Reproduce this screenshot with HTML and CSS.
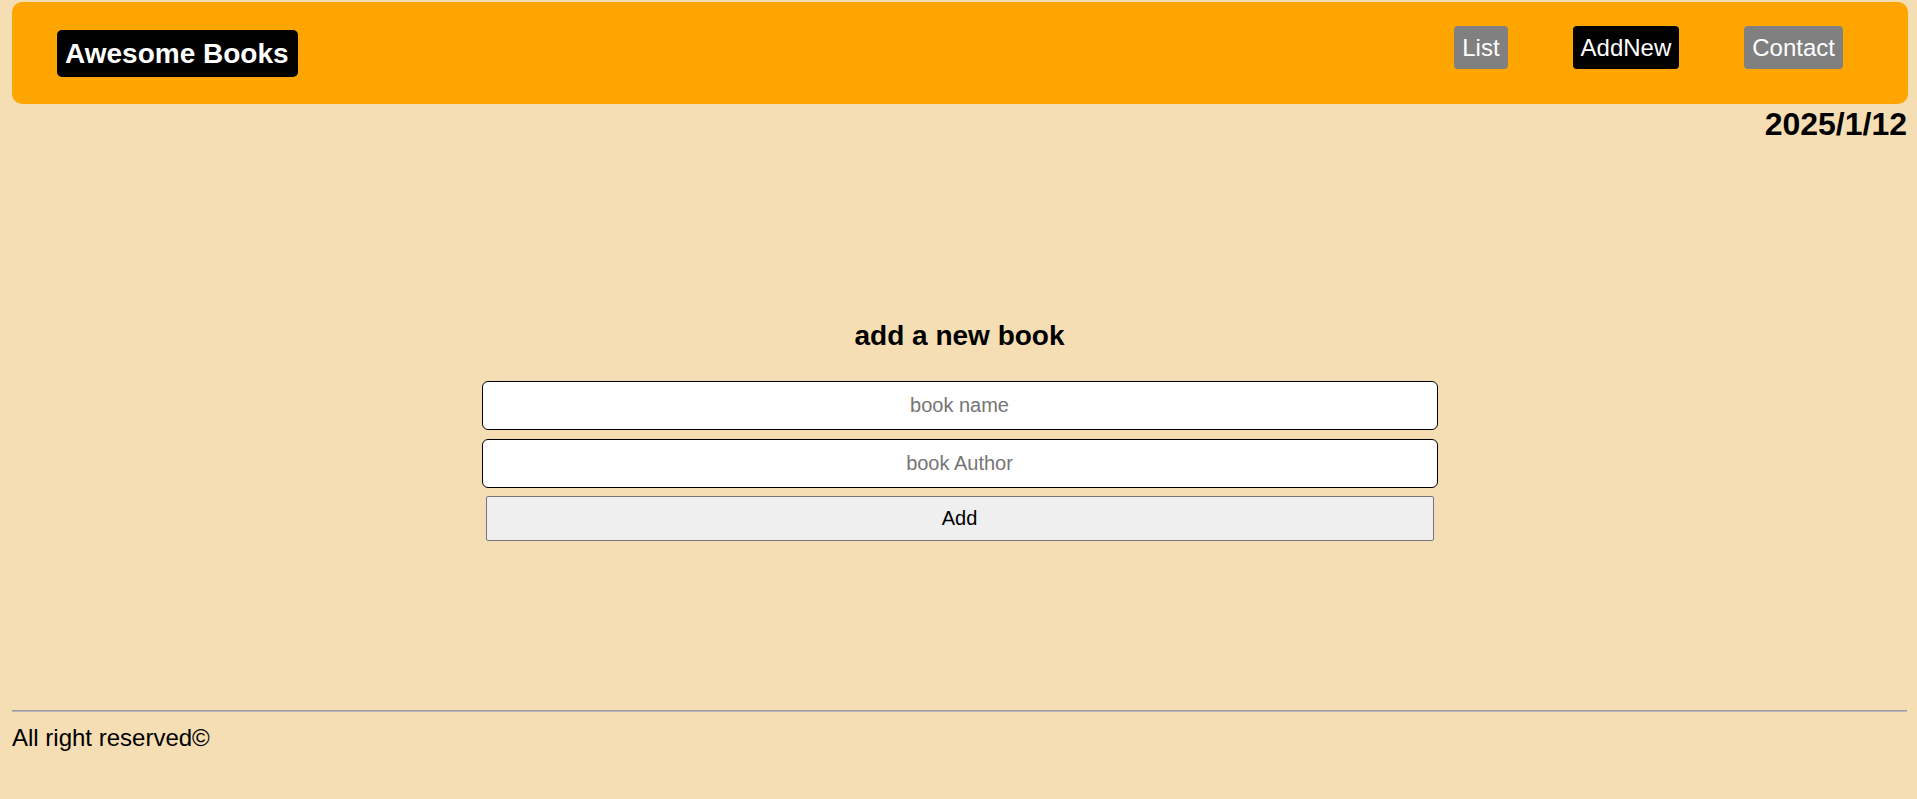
FILE: index.html
```html
<!DOCTYPE html>
<html lang="en">
<head>
<meta charset="utf-8">
<title>Awesome Books</title>
<link rel="stylesheet" href="styles.css">
</head>
<body>
  <header class="topbar">
    <h1 class="logo">Awesome Books</h1>
    <nav class="nav">
      <a class="nav-item" href="#">List</a>
      <a class="nav-item active" href="#">AddNew</a>
      <a class="nav-item" href="#">Contact</a>
    </nav>
  </header>
  <div class="date">2025/1/12</div>
  <main class="main">
    <h2 class="title">add a new book</h2>
    <form class="form">
      <input class="field field-first" type="text" placeholder="book name">
      <input class="field" type="text" placeholder="book Author">
      <button class="add-btn" type="button">Add</button>
    </form>
  </main>
  <footer class="footer">
    <hr class="rule">
    <p class="copy">All right reserved©</p>
  </footer>
</body>
</html>
```
FILE: styles.css
```css
html, body {
  margin: 0;
  padding: 0;
}
body {
  background: #f5deb3;
  font-family: "Liberation Sans", Arial, sans-serif;
  color: #000;
  padding: 2px 10px 0 12px;
}
.topbar {
  display: flex;
  align-items: flex-start;
  justify-content: space-between;
  height: 102px;
  box-sizing: border-box;
  background: #ffa500;
  border-radius: 10px;
  padding: 24px 0 0 45px;
  margin-right: -1px;
}
.logo {
  margin: 4px 0 0 0;
  background: #000;
  color: #fff;
  font-size: 28px;
  font-weight: bold;
  line-height: 33px;
  padding: 7px 9px 7px 8px;
  border-radius: 5px;
}
.nav {
  display: flex;
  gap: 65px;
  padding-right: 65px;
}
.nav-item {
  display: block;
  background: #808080;
  color: #fff;
  text-decoration: none;
  font-size: 24px;
  line-height: 27px;
  padding: 8px 8px;
  border-radius: 4px;
}
.nav-item.active {
  background: #000;
}
.date {
  text-align: right;
  font-weight: bold;
  font-size: 32px;
  line-height: 37px;
  margin-top: 2px;
}
.main {
  height: 559px;
  box-sizing: border-box;
  padding-top: 177px;
  display: flex;
  flex-direction: column;
  align-items: center;
}
.title {
  margin: 0 0 29px 0;
  font-size: 28px;
  line-height: 32px;
  font-weight: bold;
}
.form {
  display: flex;
  flex-direction: column;
  align-items: center;
  gap: 8px;
}
.field {
  width: 956px;
  height: 49px;
  box-sizing: border-box;
  border: 1px solid #000;
  border-radius: 6px;
  background: #fff;
  font-family: "Liberation Sans", Arial, sans-serif;
  font-size: 20px;
  text-align: center;
  padding: 0 12px;
  margin: 0;
}
.field-first {
  margin-bottom: 1px;
}
.field::placeholder {
  color: #757575;
}
.add-btn {
  width: 948px;
  height: 45px;
  box-sizing: border-box;
  background: #efefef;
  border: 1px solid #767676;
  border-radius: 2px;
  font-family: "Liberation Sans", Arial, sans-serif;
  font-size: 20px;
  color: #000;
  margin: 0;
}
.footer {
  margin: 0;
}
.rule {
  margin: 8px 0 0 0;
  border: 0;
  border-top: 1px solid #9a9a9a;
  border-bottom: 1px solid #b8b8b8;
}
.copy {
  margin: 12px 0 0 0;
  font-size: 24px;
  line-height: 28px;
}
```
